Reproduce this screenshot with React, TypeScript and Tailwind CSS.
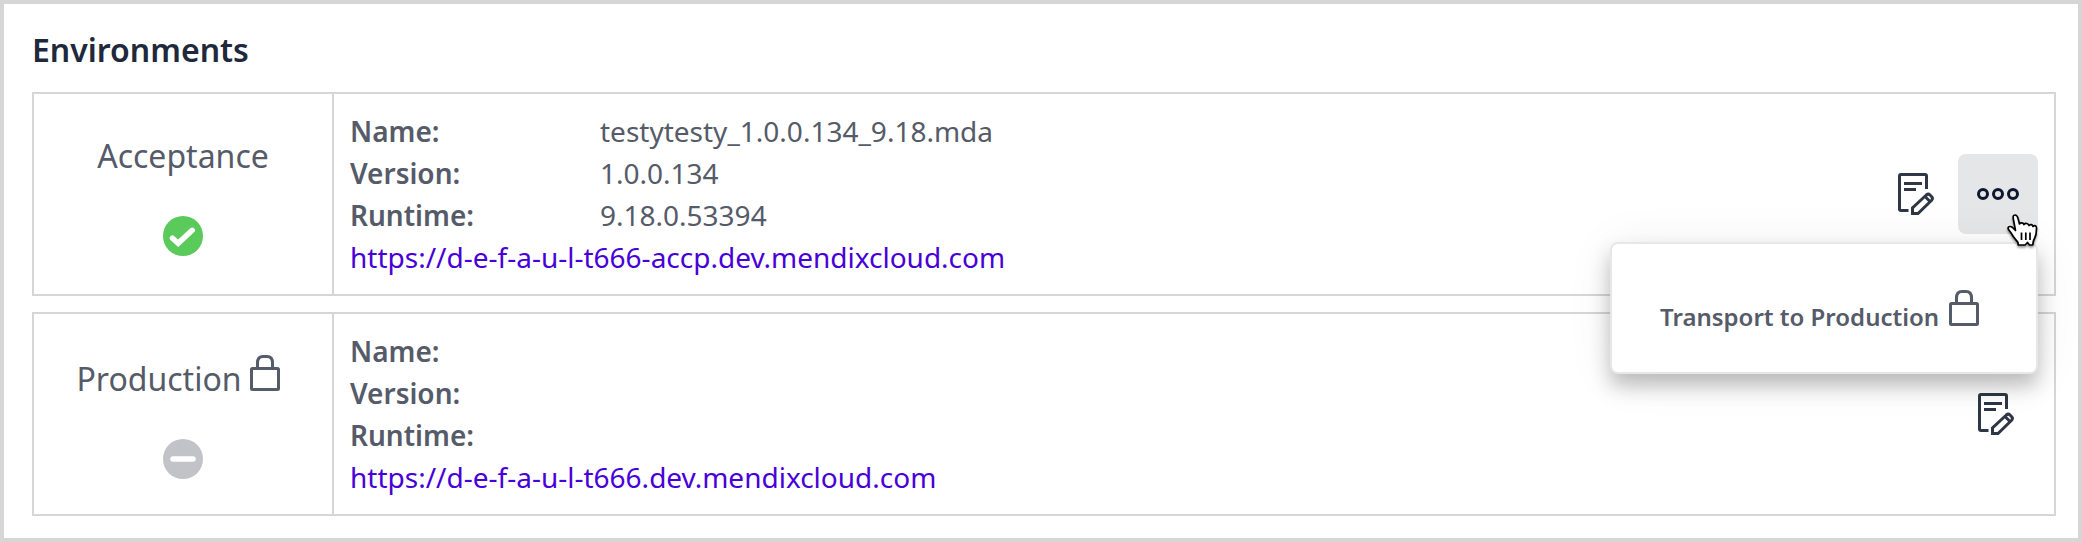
import React from "react";

function Lock({ className = "" }: { className?: string }) {
  return (
    <svg className={className} width="30" height="36" viewBox="0 0 30 36" fill="none" stroke="#555b68" strokeWidth="3">
      <rect x="1.5" y="13.5" width="27" height="21" rx="1" />
      <path d="M7.5 13.5V8C7.5 4 9.5 1.5 13 1.5H17C20.5 1.5 22.5 4 22.5 8V13.5" />
    </svg>
  );
}

function EditNote() {
  return (
    <svg width="36" height="42" viewBox="0 0 36 42" fill="none" stroke="#2f3646" strokeWidth="3">
      <path d="M28.5 16V3Q28.5 1.5 27 1.5H3Q1.5 1.5 1.5 3V36Q1.5 37.500 3 37.500H10.5" />
      <path d="M6 10.5H24M6 16.5H18" />
      <path d="M14.5 40.500V34.800L28.300 22Q30.300 20.300 32 22L33.700 23.700Q35.200 25.400 33.600 27.200L20 40.500ZM27 23.500L32 28.500" />
    </svg>
  );
}

function Dots() {
  return (
    <svg width="42" height="12" viewBox="0 0 42 12" fill="none" stroke="#0d1730" strokeWidth="3">
      <circle cx="6" cy="6" r="4.5" />
      <circle cx="21" cy="6" r="4.5" />
      <circle cx="36" cy="6" r="4.5" />
    </svg>
  );
}

function StatusIcon({ ok }: { ok: boolean }) {
  return (
    <svg width="40" height="40" viewBox="0 0 40 40" fill="none" stroke="white" strokeWidth="5.5" strokeLinecap="round">
      <circle cx="20" cy="20" r="20" fill={ok ? "#5aca5a" : "#c2c3c9"} stroke="none" />
      {ok ? <path d="M9.500 22.200L15.200 27.300L29.200 14.300" /> : <path d="M10 20H30" />}
    </svg>
  );
}

function HandCursor() {
  return (
    <svg className="absolute left-[48px] top-[60px] z-20 drop-shadow-[0_2px_1px_rgba(0,0,0,0.4)]" width="32" height="34" viewBox="0 0 32 34" fill="white" stroke="black" strokeWidth="1.700" strokeLinejoin="round">
      <path d="M12.200 31L12 28.500C10 25.500 7.500 23.500 6 20.500C4.500 17.500 2 16 2 14C2.500 12 5 12.200 6.500 13.500L9.500 16.500L7.500 6C6.500 2 7.500 1 9 1C10.500 1 11.500 2 12.200 5L13.500 10C14.500 8.500 17 8.500 18 10.500C19.500 8.800 22 9.300 23 11.500C24.500 10 26.500 10.500 27 12.500C28.500 10.800 30.800 11.500 30.500 15C30.500 19 30.500 21 28.500 24.500C27 27 27 28.500 26.800 31H23.500L21.500 28.500L19 31Z" />
      <path d="M15.500 18.500V26M19.800 18.500V26M24 18.500V26" fill="none" />
    </svg>
  );
}

function TransportMenu() {
  return (
    <div className="absolute right-0 top-[88px] z-10 flex h-[132px] w-[428px] items-start rounded-lg border-2 border-[#e6e7e8] bg-white pl-12 pt-[46px] shadow-[0_12px_20px_rgba(0,0,0,0.24),0_4px_48px_rgba(0,0,0,0.07)]">
      <span className="mt-[11px] whitespace-nowrap text-2xl leading-8 font-semibold">Transport to Production</span>
      <Lock className="ml-[10px]" />
    </div>
  );
}

type Env = { name: string; locked: boolean; pkg: string; version: string; runtime: string; url: string };

const environments: Env[] = [
  { name: "Acceptance", locked: false, pkg: "testytesty_1.0.0.134_9.18.mda", version: "1.0.0.134", runtime: "9.18.0.53394", url: "https://d-e-f-a-u-l-t666-accp.dev.mendixcloud.com" },
  { name: "Production", locked: true, pkg: "", version: "", runtime: "", url: "https://d-e-f-a-u-l-t666.dev.mendixcloud.com" },
];

function Field({ label, value }: { label: string; value: string }) {
  return (
    <div className="flex">
      <span className="w-[250px] font-semibold">{label}</span>
      <span>{value}</span>
    </div>
  );
}

function EnvironmentRow({ env }: { env: Env }) {
  return (
    <section className="flex h-[204px] border-2 border-[#d6d6d6]">
      <div className="flex w-[300px] flex-col items-center border-r-2 border-[#d6d6d6]">
        <div className={env.locked ? "mt-[41px] flex h-12 pr-[10px] text-[32px] leading-[48px]" : "mt-[38px] flex h-12 text-[32px] leading-[48px]"}>
          {env.name}
          {env.locked && <Lock className="ml-2" />}
        </div>
        <div className="mt-9">
          <StatusIcon ok={!env.locked} />
        </div>
      </div>
      <div className="flex-1 p-4 text-[28px] leading-[42px]">
        <Field label="Name:" value={env.pkg} />
        <Field label="Version:" value={env.version} />
        <Field label="Runtime:" value={env.runtime} />
        <a className="text-[#4800d8]">{env.url}</a>
      </div>
      <div className="flex items-center pr-4">
        <button className="flex h-20 w-20 items-center justify-center pr-1">
          <EditNote />
        </button>
        {!env.locked && (
          <div className="relative">
            <button className="flex h-20 w-20 items-center justify-center rounded-lg bg-[#e5e6e8]">
              <Dots />
            </button>
            <TransportMenu />
            <HandCursor />
          </div>
        )}
      </div>
    </section>
  );
}

export default function App() {
  return (
    <main className="h-[542px] w-[2082px] overflow-hidden border-4 border-[#d6d6d6] bg-white pt-[22px] pr-[22px] pl-7 font-['Noto_Sans',sans-serif] text-[#555b68]">
      <h1 className="mb-[18px] text-[32px] leading-[48px] font-semibold text-[#20293b]">Environments</h1>
      <div className="flex flex-col gap-4">
        {environments.map((env) => (
          <EnvironmentRow key={env.name} env={env} />
        ))}
      </div>
    </main>
  );
}
